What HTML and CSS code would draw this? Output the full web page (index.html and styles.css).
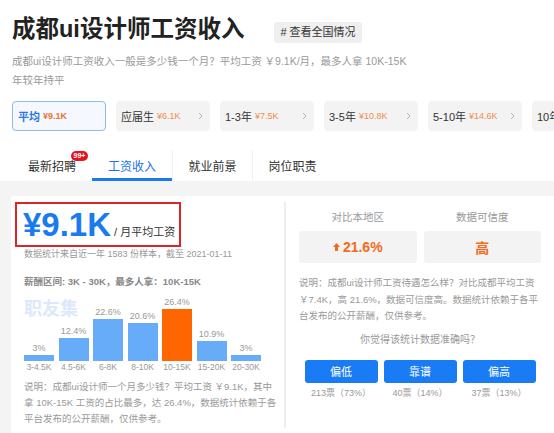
FILE: index.html
```html
<!DOCTYPE html>
<html lang="zh-CN">
<head>
    <meta charset="UTF-8">
    <meta name="viewport" content="width=device-width, initial-scale=1.0">
    <title>成都ui设计师工资收入</title>
    <link rel="stylesheet" href="styles.css">
</head>
<body>
    <div class="top">
        <div class="head">
            <h1 class="title">成都ui设计师工资收入</h1>
            <span class="tag"># 查看全国情况</span>
        </div>
        <p class="desc">成都ui设计师工资收入一般是多少钱一个月？平均工资 ￥9.1K/月，最多人拿 10K-15K 年较年持平</p>

        <div class="chips">
            <div class="chip on"><span class="name">平均</span><span class="money">¥9.1K</span></div>
            <div class="chip"><span class="name">应届生</span><span class="money">¥6.1K</span>
                <svg class="arrow" width="5" height="8" viewBox="0 0 5 8"><path d="M1 1l3 3-3 3" fill="none" stroke="#b5b5b5" stroke-width="1"/></svg>
            </div>
            <div class="chip"><span class="name">1-3年</span><span class="money">¥7.5K</span>
                <svg class="arrow" width="5" height="8" viewBox="0 0 5 8"><path d="M1 1l3 3-3 3" fill="none" stroke="#b5b5b5" stroke-width="1"/></svg>
            </div>
            <div class="chip"><span class="name">3-5年</span><span class="money">¥10.8K</span>
                <svg class="arrow" width="5" height="8" viewBox="0 0 5 8"><path d="M1 1l3 3-3 3" fill="none" stroke="#b5b5b5" stroke-width="1"/></svg>
            </div>
            <div class="chip"><span class="name">5-10年</span><span class="money">¥14.6K</span>
                <svg class="arrow" width="5" height="8" viewBox="0 0 5 8"><path d="M1 1l3 3-3 3" fill="none" stroke="#b5b5b5" stroke-width="1"/></svg>
            </div>
            <div class="chip"><span class="name">10年</span></div>
        </div>

        <div class="tabs">
            <div class="tab">最新招聘<span class="badge">99+</span></div>
            <div class="tab active">工资收入</div>
            <div class="tab">就业前景</div>
            <div class="tab">岗位职责</div>
        </div>
    </div>

    <div class="main">
        <div class="panel">
            <div class="left">
                <div class="price-box">
                    <span class="price">¥9.1K</span>
                    <span class="unit">/ 月平均工资</span>
                </div>
                <p class="data">数据统计来自近一年 1583 份样本，截至 2021-01-11</p>
                <p class="range">薪酬区间: 3K - 30K，最多人拿：10K-15K</p>

                <div class="chart">
                    <span class="mark">职友集</span>
                    <div class="col"><span class="pct">3%</span><div class="bar" style="height: 6px"></div></div>
                    <div class="col"><span class="pct">12.4%</span><div class="bar" style="height: 23px"></div></div>
                    <div class="col"><span class="pct">22.6%</span><div class="bar" style="height: 42px"></div></div>
                    <div class="col"><span class="pct">20.6%</span><div class="bar" style="height: 38px"></div></div>
                    <div class="col"><span class="pct">26.4%</span><div class="bar top-bar" style="height: 52px"></div></div>
                    <div class="col"><span class="pct">10.9%</span><div class="bar" style="height: 20px"></div></div>
                    <div class="col"><span class="pct">3%</span><div class="bar" style="height: 6px"></div></div>
                </div>
                <div class="axis">
                    <span>3-4.5K</span><span>4.5-6K</span><span>6-8K</span><span>8-10K</span><span>10-15K</span><span>15-20K</span><span>20-30K</span>
                </div>

                <p class="note">说明：成都ui设计师一个月多少钱？平均工资 ￥9.1K，其中<br>拿 10K-15K 工资的占比最多，达 26.4%，数据统计依赖于各<br>平台发布的公开薪酬，仅供参考。</p>
            </div>

            <div class="right">
                <div class="compare">
                    <div>
                        <div class="cmp-label">对比本地区</div>
                        <div class="cmp-box">
                            <svg width="7" height="8" viewBox="0 0 7 8"><path d="M3.5 0L7 4H5V8H2V4H0Z" fill="#f26b1d"/></svg>
                            <span>21.6%</span>
                        </div>
                    </div>
                    <div>
                        <div class="cmp-label">数据可信度</div>
                        <div class="cmp-box">高</div>
                    </div>
                </div>

                <p class="note">说明：成都ui设计师工资待遇怎么样？对比成都平均工资<br>￥7.4K，高 21.6%，数据可信度高。数据统计依赖于各平<br>台发布的公开薪酬，仅供参考。</p>

                <p class="ask">你觉得该统计数据准确吗？</p>
                <div class="votes">
                    <div class="vote"><button>偏低</button><span>213票（73%）</span></div>
                    <div class="vote"><button>靠谱</button><span>40票（14%）</span></div>
                    <div class="vote"><button>偏高</button><span>37票（13%）</span></div>
                </div>
            </div>
        </div>
    </div>
</body>
</html>
```

FILE: styles.css
```css
* {
    box-sizing: border-box;
}

body {
    margin: 0;
    height: 433px;
    overflow: hidden;
    background: #f4f4f4;
    font-family: "Liberation Sans", "Noto Sans CJK SC", sans-serif;
    color: #333;
}

p {
    margin: 0;
}

/* header */
.top {
    background: #fff;
    padding: 13px 0 0 12px;
}

.head {
    display: flex;
    align-items: center;
}

.title {
    margin: 0;
    font-size: 23.5px;
    line-height: 32px;
    font-weight: bold;
    color: #222;
}

.tag {
    margin: 6px 0 0 30px;
    padding: 0 6px;
    background: #efefef;
    border-radius: 3px;
    font-size: 11px;
    line-height: 21px;
    color: #333;
}

.desc {
    margin-top: 7px;
    max-width: 400px;
    font-size: 10.5px;
    line-height: 19px;
    color: #999;
}

/* experience chips */
.chips {
    display: flex;
    gap: 10px;
    margin-top: 11px;
    white-space: nowrap;
}

.chip {
    flex: none;
    width: 94px;
    height: 30px;
    display: flex;
    align-items: center;
    padding: 0 7px 0 5px;
    background: #f3f3f3;
    border-radius: 4px;
    font-size: 11px;
    color: #333;
}

.chip .money {
    margin-left: 3px;
    font-size: 9px;
    color: #f5894a;
}

.chip .arrow {
    margin-left: auto;
}

.chip.on {
    background: #f5f9ff;
    border: 1px solid #8db9ec;
}

.chip.on .name {
    color: #2a78e0;
    font-weight: bold;
}

.chip.on .money {
    color: #f0702a;
    font-weight: bold;
}

/* tabs */
.tabs {
    display: flex;
    margin-top: 19px;
    height: 31px;
}

.tab {
    position: relative;
    width: 80px;
    padding-top: 7px;
    text-align: center;
    font-size: 12px;
    line-height: 20px;
    color: #333;
}

.tab.active {
    color: #1a73e8;
    box-shadow: inset 0 -3px 0 #1a7af0;
}

.tab.active ~ .tab {
    border-left: 1px solid #f0f0f0;
}

.badge {
    position: absolute;
    left: 59px;
    top: 1px;
    width: 17px;
    height: 10px;
    border-radius: 5px;
    background: #e5141c;
    color: #fff;
    font-size: 7px;
    font-weight: bold;
    line-height: 10px;
    text-align: center;
}

/* content */
.main {
    padding: 15px 0 0 11px;
}

.panel {
    display: flex;
    background: #fff;
    height: 237px;
}

.left {
    width: 273px;
    flex: none;
    padding: 6px 20px 0 13px;
}

.price-box {
    display: inline-flex;
    align-items: baseline;
    margin-left: -9px;
    padding: 1px 4px 0 6px;
    border: 2px solid #d9262b;
}

.price {
    font-size: 33px;
    line-height: 40px;
    font-weight: bold;
    color: #1a7af0;
}

.unit {
    margin-left: 3px;
    font-size: 11px;
    color: #333;
}

.data {
    font-size: 9px;
    line-height: 14px;
    color: #999;
}

.range {
    margin-top: 14px;
    font-size: 9.5px;
    line-height: 14px;
    font-weight: bold;
    color: #888;
}

.chart {
    position: relative;
    display: flex;
    align-items: flex-end;
    gap: 4.5px;
    height: 72px;
}

.mark {
    position: absolute;
    left: 0;
    top: 10px;
    font-size: 18px;
    line-height: 20px;
    font-weight: bold;
    color: #dde9fb;
}

.col {
    position: relative;
    width: 30px;
    display: flex;
    flex-direction: column;
    align-items: center;
}

.pct {
    margin-bottom: 1px;
    font-size: 9px;
    line-height: 12px;
    color: #999;
}

.bar {
    width: 30px;
    background: #66acf9;
}

.bar.top-bar {
    background: #ff6600;
}

.axis {
    display: flex;
    gap: 4.5px;
    white-space: nowrap;
}

.axis span {
    width: 30px;
    text-align: center;
    font-size: 8.5px;
    line-height: 12px;
    color: #999;
}

.note {
    margin-top: 6px;
    font-size: 9.5px;
    line-height: 16px;
    color: #999;
    white-space: nowrap;
}

.right {
    flex: 1;
    height: 226px;
    margin-top: 6px;
    padding: 7px 13px 0 13px;
    border-left: 2px solid #eee;
}

.compare {
    display: grid;
    grid-template-columns: 1fr 1fr;
    column-gap: 7px;
}

.cmp-label {
    text-align: center;
    font-size: 10.5px;
    line-height: 16px;
    color: #999;
}

.cmp-box {
    margin-top: 6px;
    height: 32px;
    display: flex;
    align-items: center;
    justify-content: center;
    gap: 3px;
    background: #f3f3f3;
    border-radius: 3px;
    font-size: 14px;
    font-weight: bold;
    color: #f26b1d;
}

.right .note {
    margin-top: 12px;
    line-height: 16.5px;
}

.ask {
    margin-top: 7px;
    text-align: center;
    font-size: 10px;
    line-height: 16px;
    color: #999;
}

.votes {
    display: flex;
    justify-content: center;
    gap: 6px;
    margin-top: 12px;
}

.vote {
    width: 73px;
    display: flex;
    flex-direction: column;
    align-items: center;
}

.vote button {
    width: 73px;
    height: 23px;
    padding: 0;
    border: none;
    border-radius: 3px;
    background: #1a7cf5;
    color: #fff;
    font-family: inherit;
    font-size: 11px;
}

.vote span {
    margin-top: 3px;
    font-size: 9px;
    line-height: 14px;
    color: #999;
}
```
